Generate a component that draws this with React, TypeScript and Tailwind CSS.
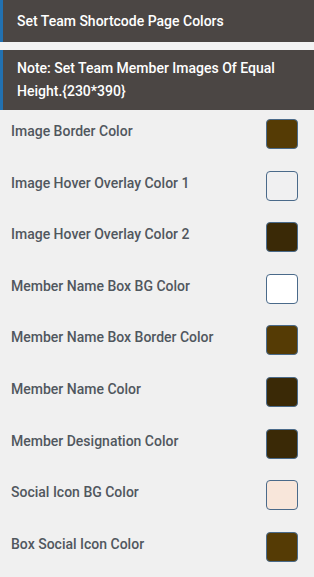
const rows: { label: string; color: string }[] = [
  { label: "Image Border Color", color: "#553b05" },
  { label: "Image Hover Overlay Color 1", color: "#f0f0f1" },
  { label: "Image Hover Overlay Color 2", color: "#3a2906" },
  { label: "Member Name Box BG Color", color: "#ffffff" },
  { label: "Member Name Box Border Color", color: "#553b05" },
  { label: "Member Name Color", color: "#3a2906" },
  { label: "Member Designation Color", color: "#3a2906" },
  { label: "Social Icon BG Color", color: "#f8e6da" },
  { label: "Box Social Icon Color", color: "#553b05" },
];

export default function App() {
  return (
    <div className="w-[314px] h-[577px] bg-[#f0f0f0] font-['Roboto',sans-serif] overflow-hidden">
      <div className="h-[42px] flex items-center pl-[14px] bg-[#4b4644] border-l-[3px] border-[#2271b1] text-white text-[14px] font-medium">
        Set Team Shortcode Page Colors
      </div>
      <div className="h-[8px] bg-[#f3f3f3]" />
      <div className="h-[60px] flex items-center pl-[14px] pr-[20px] bg-[#4b4644] border-l-[3px] border-[#2271b1] text-white text-[14px] font-medium leading-[23px]">
        Note: Set Team Member Images Of Equal Height.{"{230*390}"}
      </div>
      <div className="pt-[9px]">
        {rows.map((row) => (
          <div key={row.label} className="h-[51.6px] flex items-start justify-between pl-[11px] pr-[16px]">
            <span className="mt-[2px] text-[14px] leading-[20px] font-medium text-[#50575e]">
              {row.label}
            </span>
            <span
              className="w-[32px] h-[30px] rounded-[4px] border border-[#4a6a8a]"
              style={{ backgroundColor: row.color }}
            />
          </div>
        ))}
      </div>
    </div>
  );
}
